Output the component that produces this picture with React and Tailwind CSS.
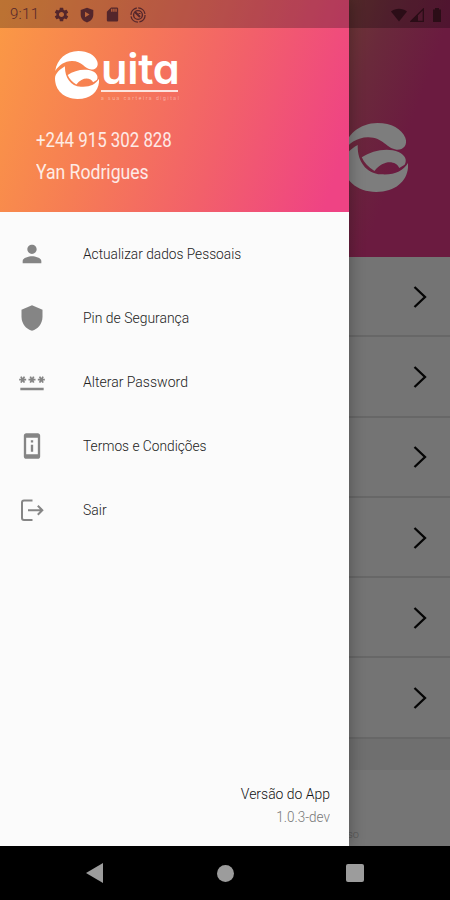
import { MdPerson, MdPassword, MdPermDeviceInformation, MdSettings, MdSdCard } from "react-icons/md";

const ShieldIcon = ({ className }) => (
  <svg viewBox="0 0 24 24" className={className} fill="currentColor">
    <path d="M12 1 3 5v6c0 5.55 3.84 10.74 9 12 5.16-1.26 9-6.45 9-12V5l-9-4z" />
  </svg>
);

const ExitIcon = ({ className }) => (
  <svg viewBox="0 0 28 28" className={className} fill="none" stroke="currentColor" strokeWidth="2">
    <path d="M14.5 4.5H6A2 2 0 0 0 4 6.500V22a2 2 0 0 0 2 2h8.500M10 14.200h14M19.800 9.700l4.500 4.500-4.500 4.500" />
  </svg>
);

const LogoMark = ({ className }) => (
  <svg viewBox="0 0 194 207" className={className} fill="currentColor" preserveAspectRatio="none">
    <path d="M1 86C8 36 50 0 103 0c42 0 72 18 83 44 8 22-6 37-26 36-28-2-42-38-86-37C42 44 18 60 1 86Z" />
    <path d="M44 66c-2 44 22 86 70 88 38 3 66-10 80-34 4 46-30 87-95 87C40 207 0 170 0 118 0 98 22 78 44 66Z" />
    <path d="M56 103c30-20 76-30 110-16 20 9 26 25 18 38l-16 10c-10-22-47-26-74 9-18-10-31-25-38-41Z" />
  </svg>
);

const menu = [
  { label: "Actualizar dados Pessoais", Icon: MdPerson, text: "scale-x-[0.915]" },
  { label: "Pin de Segurança", Icon: ShieldIcon, text: "scale-x-[0.93]" },
  { label: "Alterar Password", Icon: MdPassword, text: "scale-x-[0.935]" },
  { label: "Termos e Condições", Icon: MdPermDeviceInformation, text: "scale-x-[0.915]" },
  { label: "Sair", Icon: ExitIcon, text: "scale-x-[0.93]" },
];

function StatusBar() {
  return (
    <div className="absolute inset-x-0 top-0 flex h-7 items-center bg-black/25 pl-2.5 pr-2 pt-px text-[#54262b]">
      <span className="w-[43px] font-[Roboto] text-[15px] tracking-[0.3px]">9:11</span>
      <MdSettings className="size-[17px]" />
      <svg viewBox="0 0 16 16" className="ml-[9px] size-4" fill="currentColor">
        <path fillRule="evenodd" d="M8 .8 14.300 3v4.800c0 3.700-2.500 6.300-6.300 7.700C4.200 14.100 1.700 11.500 1.700 7.800V3L8 .8ZM6 4.800v5.400l4.600-2.700L6 4.800Z" />
      </svg>
      <MdSdCard className="ml-[9px] size-[17px]" />
      <svg viewBox="0 0 16 16" className="ml-[9px] size-4" fill="none" stroke="currentColor">
        <circle cx="8" cy="8" r="7.100" strokeWidth="1.300" strokeDasharray="9.650 1.500" />
        <circle cx="8" cy="8" r="4.400" strokeWidth="1.400" />
        <path d="m5 5 5 5M9.500 6v1" strokeWidth="2" />
      </svg>
      <div className="ml-auto flex items-center text-[#2b0d17]">
        <svg viewBox="0 0 16 14" className="h-[14px] w-4" fill="currentColor">
          <path d="M0 3.500C4.500-.2 11.500-.2 16 3.500L8 13.500 0 3.500Z" />
        </svg>
        <svg viewBox="0 0 14 14" className="ml-[3px] size-[14px]">
          <path d="M1 13.300 13.300 1v12.300H1Z" fill="none" stroke="currentColor" strokeWidth="1.300" />
          <path d="M1 13.300 8 6v7.300H1Z" fill="currentColor" />
        </svg>
        <svg viewBox="0 0 10 14" className="ml-[8px] h-[14px] w-[10px]" fill="currentColor">
          <path d="M3 0h4v1.500h2V14H1V1.500h2V0Z" />
        </svg>
      </div>
    </div>
  );
}

function HomeScreen() {
  return (
    <div className="flex h-[846px] flex-col bg-[#757575]">
      <div className="flex h-[257px] shrink-0 justify-end bg-[linear-gradient(110deg,#6d3836_64%,#6a2a3b_72%,#6b1b40_84%)] pr-[42px] pt-[123px]">
        <LogoMark className="h-[69px] w-[65px] text-[#7d7d7d]" />
      </div>
      {[0, 1, 2, 3, 4, 5].map((row) => (
        <div
          key={row}
          className="flex h-[80.300px] shrink-0 items-center justify-end border-b-2 border-[#676767] bg-[#747474] pr-[23px] pt-px"
        >
          <svg viewBox="0 0 14 22" className="h-[22px] w-[14px]" fill="none" stroke="#050505" strokeWidth="2.300">
            <path d="m1.500 1 10.500 10-10.500 10" />
          </svg>
        </div>
      ))}
      <div className="h-[31px] bg-[#6f6f6f]" />
      <div className="mt-auto pb-[3px] pr-[91px] text-right text-[11px] text-[#555]">Termos de Uso</div>
    </div>
  );
}

function Drawer() {
  return (
    <aside className="absolute left-0 top-0 flex h-[846px] w-[349px] flex-col bg-[#fbfbfb] shadow-[1px_0_14px_rgba(0,0,0,0.3)]">
      <header className="h-[212px] bg-[linear-gradient(108deg,#fb9a44_0%,#f67d54_32%,#f2606a_63%,#ef4384_94%)] text-white">
        <div className="flex pl-[55px] pt-[51px]">
          <LogoMark className="h-[48px] w-[44px]" />
          <div className="w-[80px] pl-[2px]">
            <div className="h-[39px] origin-left scale-x-[1.03] font-[Inter] text-[42px] font-semibold leading-[36px] tracking-[-0.3px] [font-feature-settings:'cv11'_1]">
              uita
            </div>
            <div className="h-[1.500px] w-[77px] bg-white/80" />
            <div className="mt-[3px] whitespace-nowrap text-[5px] leading-[6px] tracking-[1.600px] text-white/60">
              a sua carteira digital
            </div>
          </div>
        </div>
        <div className="pl-9 pt-[23.500px] text-xl font-normal leading-8 text-white/85">
          <p className="origin-left scale-x-[0.843]">+244 915 302 828</p>
          <p className="origin-left scale-x-[0.88]">Yan Rodrigues</p>
        </div>
      </header>
      <nav className="pt-[10px]">
        {menu.map(({ label, Icon, text }) => (
          <a key={label} className="flex h-16 items-center pl-[18px] text-[15px] text-[#222]">
            <Icon className="size-7 text-[#858585]" />
            <span className={`ml-[37px] origin-left pt-px ${text}`}>{label}</span>
          </a>
        ))}
      </nav>
      <footer className="mt-auto pb-[17px] pr-[19px] text-right text-[15px] leading-[23px]">
        <p className="origin-right scale-x-[0.93] text-[#111]">Versão do App</p>
        <p className="origin-right scale-x-[0.9] text-[#777]">1.0.3-dev</p>
      </footer>
    </aside>
  );
}

export default function App() {
  return (
    <div className="relative h-[900px] w-[450px] overflow-hidden bg-black font-[Roboto,sans-serif] font-light">
      <HomeScreen />
      <Drawer />
      <StatusBar />
      <div className="flex h-[54px] items-center text-[#9c9c9c]">
        <svg viewBox="0 0 17 20" className="ml-[86px] h-5 w-[17px]" fill="currentColor">
          <path d="M17 0v20L0 10Z" />
        </svg>
        <div className="ml-[114px] size-[17px] rounded-full bg-current" />
        <div className="ml-[112px] size-[18px] rounded-[2px] bg-current" />
      </div>
    </div>
  );
}
